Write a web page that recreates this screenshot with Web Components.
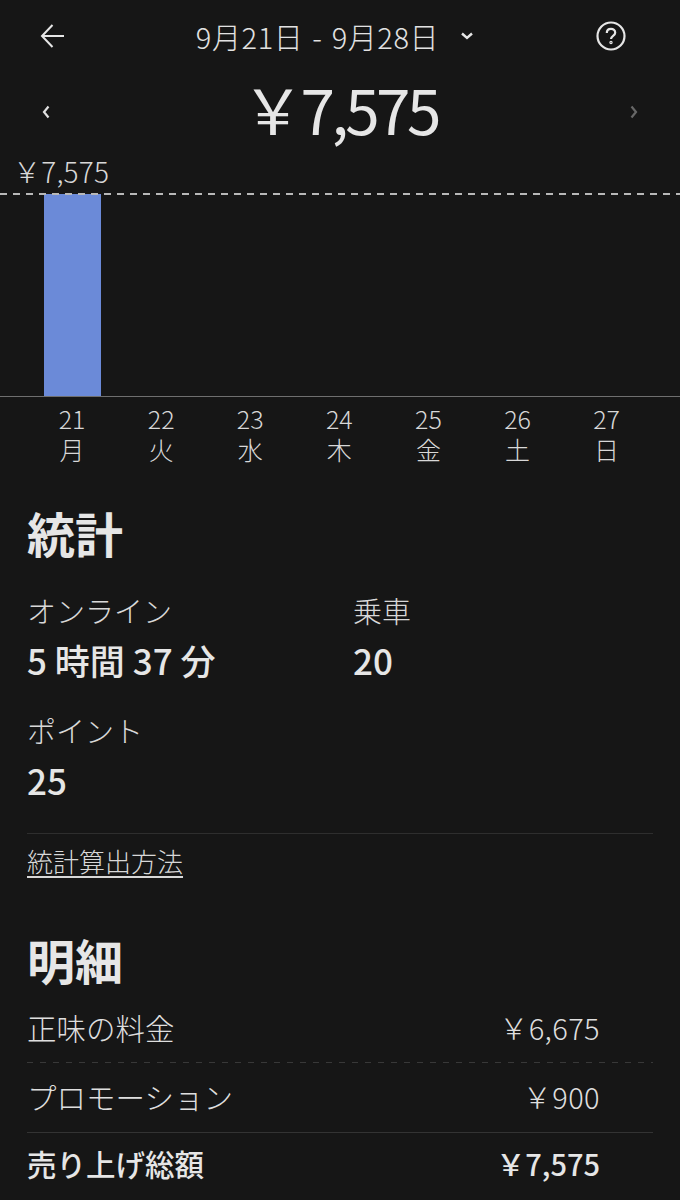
<!DOCTYPE html>
<html lang="ja">
<head>
<meta charset="utf-8">
<title>売り上げ</title>
<style>
  html, body { margin: 0; padding: 0; background: #161616; }
  body { width: 680px; height: 1200px; overflow: hidden; color: #e6e6e6; font-family: "Noto Sans CJK JP", "Noto Sans", sans-serif; }
</style>
</head>
<body>
<earn-header></earn-header>
<earn-total></earn-total>
<earn-chart></earn-chart>
<earn-stats></earn-stats>
<earn-details></earn-details>

<script>
class EarnHeader extends HTMLElement {
    connectedCallback() {
        this.attachShadow({ mode: 'open' }).innerHTML = `
<style>
    :host{display:grid;grid-template-columns:1fr auto 1fr;align-items:center;height:72px;}
    .back{margin-left:40px;width:24px;height:24px;display:block;}
    .range{display:flex;align-items:center;margin-right:11px;font-size:29px;font-weight:300;letter-spacing:.6px;color:#e2e2e2;word-spacing:2px;}
    .range svg{margin-left:22px;}
    .help{justify-self:end;margin-right:54px;display:block;}
</style>
<svg class="back" viewBox="0 0 24 24" fill="none" stroke="#e6e6e6" stroke-width="2"><path d="M24 12H2M12.500 1 2 12l10.500 11"/></svg>
<div class="range"><span>9月21日 - 9月28日</span>
<svg width="12" height="8" viewBox="0 0 12 8" fill="none" stroke="#e6e6e6" stroke-width="2.400"><path d="M1 1.500 6 6l5-4.500"/></svg></div>
<svg class="help" width="30" height="30" viewBox="0 0 30 30" fill="none" stroke="#e6e6e6" stroke-width="2.200"><circle cx="15" cy="15" r="13.500"/><path d="M10.800 12c0-2.600 1.900-4.100 4.200-4.100s4.200 1.500 4.200 3.800c0 3.200-4.200 3.200-4.200 6.300"/><circle cx="15" cy="21.500" r=".6"/></svg>
`;
    }
}

class EarnTotal extends HTMLElement {
    connectedCallback() {
        this.attachShadow({ mode: 'open' }).innerHTML = `
<style>
    :host{display:flex;align-items:center;justify-content:space-between;height:72px;padding:0 42px;box-sizing:border-box;}
    b{font-size:62px;font-weight:400;letter-spacing:-3.500px;line-height:72px;color:#e6e6e6;}
    svg{display:block;margin-top:8px;}
    .next{opacity:.4;}
</style>
<svg width="8" height="14" viewBox="0 0 8 14" fill="none" stroke="#e0e0e0" stroke-width="2.200"><path d="M6.500 1.500 2 7l4.500 5.500"/></svg>
<b>&#xFFE5;7,575</b>
<svg class="next" width="8" height="14" viewBox="0 0 8 14" fill="none" stroke="#e0e0e0" stroke-width="2.200"><path d="M1.500 1.500 6 7l-4.500 5.500"/></svg>
`;
    }
}

class EarnChart extends HTMLElement {
    connectedCallback() {
        const days = [['21','月'],['22','火'],['23','水'],['24','木'],['25','金'],['26','土'],['27','日']];
        this.attachShadow({ mode: 'open' }).innerHTML = `
<style>
    :host{display:block;position:relative;}
    .max{font-size:28px;font-weight:300;line-height:32px;height:32px;padding:11px 0 0 13px;letter-spacing:.2px;color:#d8d8d8;}
    .plot{height:202px;margin-top:7px;border-bottom:1px solid #6f6f6f;padding-left:44px;position:relative;}
    .plot::after{content:"";position:absolute;left:0;right:0;top:-1px;height:2px;background:repeating-linear-gradient(90deg,#b8b8b8 0 7px,transparent 7px 13px);}
    .bar{width:57px;height:100%;background:#6b8ad8;}
    .days{display:grid;grid-template-columns:repeat(7,89.1px);padding:6px 0 0 27.500px;}
    .day{text-align:center;font-size:25px;font-weight:300;line-height:31px;color:#d8d8d8;}
</style>
<div class="max">&#xFFE5;7,575</div>
<div class="plot"><div class="bar"></div></div>
<div class="days">${days.map(d => `<div class="day">${d[0]}<br>${d[1]}</div>`).join('')}</div>
`;
    }
}

class EarnStat extends HTMLElement {
    connectedCallback() {
        this.attachShadow({ mode: 'open' }).innerHTML = `
<style>
    :host{display:block;}
    .k{font-size:29px;font-weight:300;line-height:40px;color:#d8d8d8;}
    .v{font-size:35px;font-weight:500;line-height:48px;margin-top:6px;color:#e6e6e6;}
</style>
<div class="k">${this.getAttribute('label')}</div>
<div class="v"><slot></slot></div>
`;
    }
}

class EarnStats extends HTMLElement {
    connectedCallback() {
        this.attachShadow({ mode: 'open' }).innerHTML = `
<style>
    :host{display:block;padding:0 27px;}
    h2{margin:0;font-size:48px;font-weight:700;line-height:64px;padding-top:35px;color:#e6e6e6;}
    .grid{display:grid;grid-template-columns:326px 1fr;row-gap:26px;margin-top:26px;}
    .foot{border-top:1px solid #2e2e2e;margin-top:29px;padding-top:7px;font-size:26px;font-weight:300;line-height:40px;color:#d8d8d8;}
    .foot span{text-decoration:underline;text-underline-offset:4px;}
</style>
<h2>統計</h2>
<div class="grid">
    <earn-stat label="オンライン">5 時間 37 分</earn-stat>
    <earn-stat label="乗車">20</earn-stat>
    <earn-stat label="ポイント">25</earn-stat>
</div>
<div class="foot"><span>統計算出方法</span></div>
`;
    }
}

class EarnRow extends HTMLElement {
    connectedCallback() {
        this.attachShadow({ mode: 'open' }).innerHTML = `
<style>
    :host{display:flex;justify-content:space-between;align-items:center;box-sizing:border-box;padding-right:53px;font-size:29.500px;font-weight:300;color:#dedede;}
    :host([strong]){font-weight:500;color:#e6e6e6;}
    .val{font-size:29px;letter-spacing:.4px;}
    :host([strong]) .val{letter-spacing:0;}
</style>
<span>${this.getAttribute('label')}</span><span class="val">${this.getAttribute('value')}</span>
`;
    }
}

class EarnDetails extends HTMLElement {
    connectedCallback() {
        this.attachShadow({ mode: 'open' }).innerHTML = `
<style>
    :host{display:block;padding:0 27px;}
    h2{margin:0;font-size:48px;font-weight:700;line-height:64px;padding-top:46px;color:#e6e6e6;}
    .one{height:72px;background:repeating-linear-gradient(90deg,#383838 0 6px,transparent 6px 13px) bottom/100% 1px no-repeat;}
    .two{height:70px;padding-bottom:4px;border-bottom:1px solid #333;}
    .three{height:60px;}
</style>
<h2>明細</h2>
<earn-row class="one" label="正味の料金" value="&#xFFE5;6,675"></earn-row>
<earn-row class="two" label="プロモーション" value="&#xFFE5;900"></earn-row>
<earn-row class="three" label="売り上げ総額" value="&#xFFE5;7,575" strong></earn-row>
`;
    }
}

customElements.define('earn-header', EarnHeader);
customElements.define('earn-total', EarnTotal);
customElements.define('earn-chart', EarnChart);
customElements.define('earn-stat', EarnStat);
customElements.define('earn-stats', EarnStats);
customElements.define('earn-row', EarnRow);
customElements.define('earn-details', EarnDetails);
</script>
</body>
</html>
